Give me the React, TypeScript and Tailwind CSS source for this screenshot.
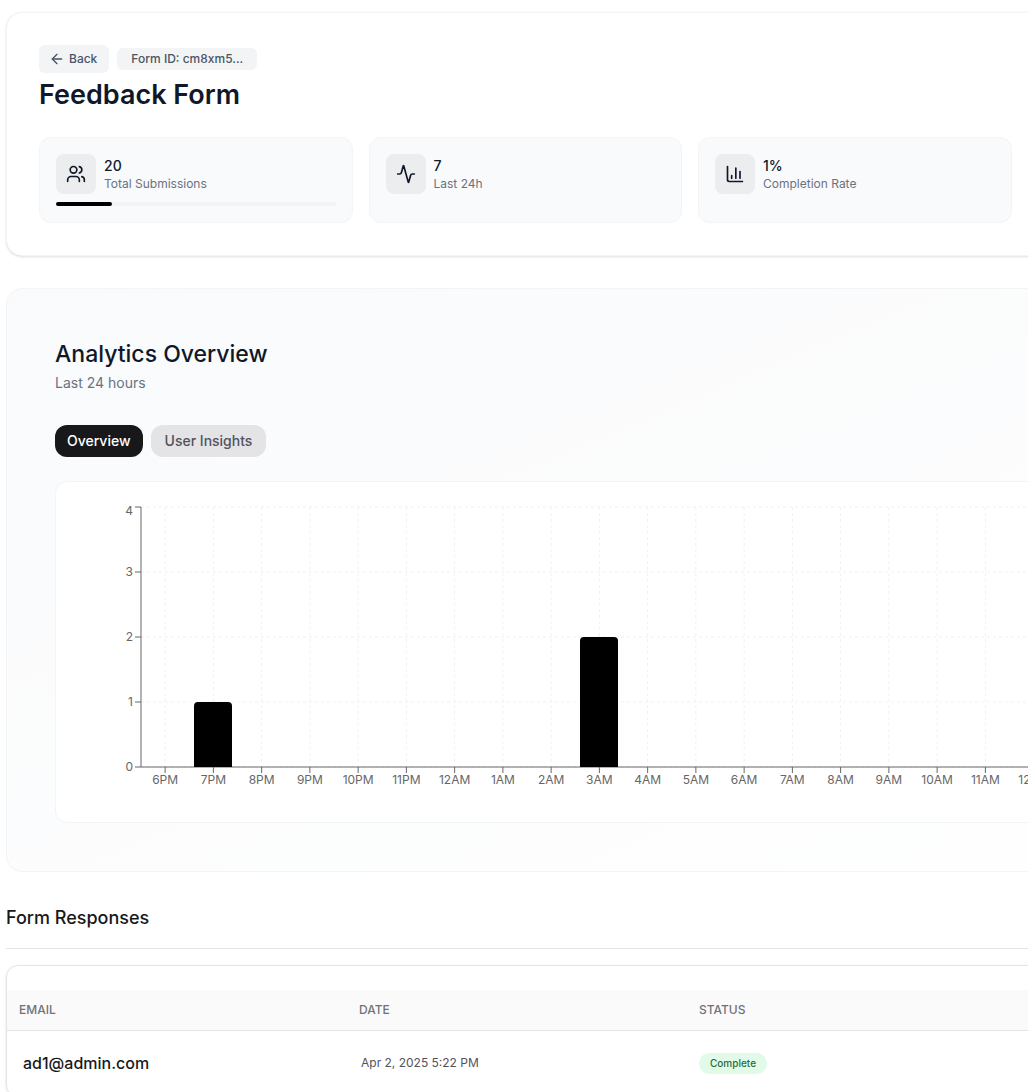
import { useEffect, useRef, useState } from "react";
import type { ReactNode } from "react";
import { Activity, ArrowLeft, ChartColumn, Users } from "lucide-react";

const hours = [
  "6PM", "7PM", "8PM", "9PM", "10PM", "11PM", "12AM", "1AM", "2AM", "3AM", "4AM", "5AM",
  "6AM", "7AM", "8AM", "9AM", "10AM", "11AM", "12PM", "1PM", "2PM", "3PM", "4PM", "5PM",
];
const counts: Record<string, number> = { "7PM": 1, "3AM": 2 };

const AXIS = 61;
const TOP = 1;
const PLOT = 260;
const MAX = 4;

function SubmissionsChart() {
  const box = useRef<HTMLDivElement>(null);
  const [width, setWidth] = useState(1220);

  useEffect(() => {
    const el = box.current;
    if (!el) return;
    const observer = new ResizeObserver(() => setWidth(el.clientWidth));
    observer.observe(el);
    setWidth(el.clientWidth);
    return () => observer.disconnect();
  }, []);

  const band = (width - AXIS - 1) / hours.length;
  const base = TOP + PLOT;
  const yFor = (v: number) => base - (v / MAX) * PLOT;

  return (
    <div ref={box}>
      <svg width={width} height={292} className="block overflow-visible" role="img" aria-label="Submissions per hour">
        <g stroke="#f1f1f1" strokeDasharray="3 3">
          {[0, 1, 2, 3, 4].map((v) => (
            <line key={v} x1={AXIS} x2={width - 1} y1={yFor(v)} y2={yFor(v)} />
          ))}
          {hours.map((h, i) => (
            <line key={h} x1={AXIS + band * (i + 0.5)} x2={AXIS + band * (i + 0.5)} y1={TOP} y2={base} />
          ))}
        </g>
        <g stroke="#666666">
          <line x1={AXIS} x2={width - 1} y1={base} y2={base} />
          <line x1={AXIS} x2={AXIS} y1={TOP} y2={base} />
          {[0, 1, 2, 3, 4].map((v) => (
            <line key={v} x1={AXIS - 6} x2={AXIS} y1={yFor(v)} y2={yFor(v)} />
          ))}
          {hours.map((h, i) => (
            <line key={h} x1={AXIS + band * (i + 0.5)} x2={AXIS + band * (i + 0.5)} y1={base} y2={base + 6} />
          ))}
        </g>
        {hours.map((h, i) => {
          const value = counts[h];
          if (!value) return null;
          const x = Math.round(AXIS + band * (i + 0.1));
          const y = yFor(value);
          return (
            <path key={h} d={`M${x} ${base}V${y + 4}a4 4 0 0 1 4-4h30a4 4 0 0 1 4 4V${base}Z`} fill="#000" />
          );
        })}
        <g fill="#666666" className="text-xs">
          {[0, 1, 2, 3, 4].map((v) => (
            <text key={v} x={AXIS - 8} y={v === MAX ? TOP + 8 : yFor(v) + 4} textAnchor="end">
              {v}
            </text>
          ))}
          {hours.map((h, i) => (
            <text key={h} x={AXIS + band * (i + 0.5)} y={base + 17} textAnchor="middle">
              {h}
            </text>
          ))}
        </g>
      </svg>
    </div>
  );
}

function StatCard({ icon, value, label, children }: { icon: ReactNode; value: string; label: string; children?: ReactNode }) {
  return (
    <div className="rounded-xl border border-gray-100 bg-[#f9fafc] p-4">
      <div className="flex items-center gap-2">
        <div className="flex size-10 items-center justify-center rounded-lg bg-[#ecedef]">{icon}</div>
        <div>
          <p className="text-sm leading-5 font-medium">{value}</p>
          <p className="text-xs leading-4 text-gray-500">{label}</p>
        </div>
      </div>
      {children}
    </div>
  );
}

const responses = [{ email: "ad1@admin.com", date: "Apr 2, 2025 5:22 PM", status: "Complete" }];

export default function App() {
  return (
    <div className="overflow-x-hidden bg-white font-['Inter',sans-serif] text-gray-900">
      <main className="min-w-[1380px] px-1.5 pt-3">
        <header className="rounded-2xl border border-gray-100 bg-white p-8 shadow-sm">
          <div className="flex items-center gap-2">
            <button type="button" className="flex h-7 items-center gap-1 rounded-md bg-gray-100 pr-3 pl-2.5 text-xs font-medium text-gray-600">
              <ArrowLeft className="size-4" />
              Back
            </button>
            <span className="rounded-md bg-gray-100 px-3.5 py-0.5 text-xs leading-[18px] font-medium text-gray-600">
              Form ID: cm8xm5...
            </span>
          </div>
          <h1 className="mt-1 text-[27px] leading-9 font-semibold">Feedback Form</h1>
          <div className="mt-6 grid grid-cols-4 gap-4">
            <StatCard icon={<Users className="size-5" />} value="20" label="Total Submissions">
              <div className="mt-2 h-1 rounded-full bg-gray-100">
                <div className="h-full w-1/5 rounded-full bg-black" />
              </div>
            </StatCard>
            <StatCard icon={<Activity className="size-5" />} value="7" label="Last 24h" />
            <StatCard icon={<ChartColumn className="size-5" />} value="1%" label="Completion Rate" />
          </div>
        </header>

        <section className="mt-8 rounded-2xl border border-gray-100 bg-linear-to-br from-gray-50 to-white p-12">
          <h2 className="text-[23px] leading-[34px] font-medium">Analytics Overview</h2>
          <p className="mt-0.5 text-sm leading-5 text-gray-500">Last 24 hours</p>
          <div className="mt-8 flex gap-2">
            <button type="button" className="h-8 rounded-xl bg-zinc-900 px-3 text-sm font-medium text-white">Overview</button>
            <button type="button" className="h-8 rounded-xl bg-zinc-200 px-3.5 text-sm font-medium text-zinc-600">User Insights</button>
          </div>
          <div className="mt-6 rounded-xl border border-gray-100 bg-white p-6">
            <SubmissionsChart />
          </div>
        </section>

        <section className="mt-8">
          <h2 className="border-b border-zinc-200 pb-4 text-lg leading-7 font-medium text-zinc-900">Form Responses</h2>
          <div className="mt-4 rounded-xl border border-zinc-200 pt-6 shadow-sm">
            <table className="w-full table-fixed text-left">
              <thead>
                <tr className="h-10 border-b border-zinc-200 bg-zinc-50 text-xs text-zinc-500 uppercase">
                  <th className="w-[340px] px-3 font-medium">Email</th>
                  <th className="w-[340px] px-3 font-medium">Date</th>
                  <th className="px-3 font-medium">Status</th>
                </tr>
              </thead>
              <tbody>
                {responses.map((r) => (
                  <tr key={r.email} className="h-[66px]">
                    <td className="px-4 text-base font-medium text-zinc-900">{r.email}</td>
                    <td className="px-3.5 text-xs text-zinc-600">{r.date}</td>
                    <td className="px-3">
                      <span className="block w-fit rounded-full bg-[#e1fbe8] px-[11px] py-0.5 text-[10px] leading-[17px] font-medium text-[#2a6b3c]">{r.status}</span>
                    </td>
                  </tr>
                ))}
              </tbody>
            </table>
          </div>
        </section>
      </main>
    </div>
  );
}
